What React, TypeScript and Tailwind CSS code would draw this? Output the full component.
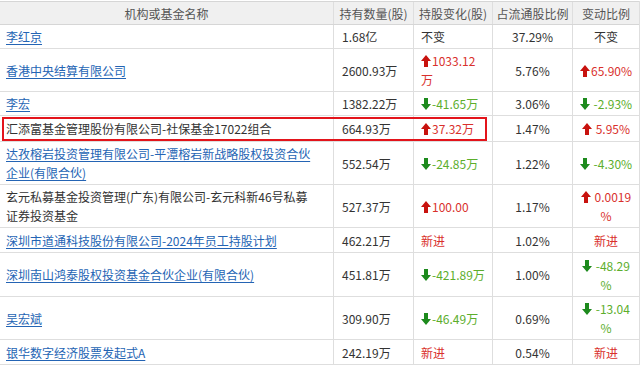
import type { ReactNode } from "react";

const Up = () => (
  <svg width="10" height="12" viewBox="0 0 10 12" className="inline-block align-[-1px] mr-[1px]">
    <path d="M5 0 L10 6 L7 6 L7 12 L3 12 L3 6 L0 6 Z" fill="#c8120e" />
  </svg>
);

const Down = () => (
  <svg width="10" height="12" viewBox="0 0 10 12" className="inline-block align-[-1px] mr-[1px]">
    <path d="M5 12 L10 6 L7 6 L7 0 L3 0 L3 6 L0 6 Z" fill="#1d8a1d" />
  </svg>
);

const Red = ({ children }: { children: ReactNode }) => <span className="text-[#d9302c]">{children}</span>;
const Green = ({ children }: { children: ReactNode }) => <span className="text-[#5cae2c]">{children}</span>;

type Row = {
  name: ReactNode;
  link: boolean;
  h: string;
  qty: string;
  change: ReactNode;
  pct: string;
  ratio: ReactNode;
  boxed?: boolean;
};

const rows: Row[] = [
  { name: "李红京", link: true, h: "h-[24px]", qty: "1.68亿", change: "不变", pct: "37.29%", ratio: "不变" },
  {
    name: "香港中央结算有限公司",
    link: true,
    h: "h-[43px]",
    qty: "2600.93万",
    change: (
      <Red>
        <Up />1033.12
        <br />万
      </Red>
    ),
    pct: "5.76%",
    ratio: (
      <Red>
        <Up />65.90%
      </Red>
    ),
  },
  {
    name: "李宏",
    link: true,
    h: "h-[24px]",
    qty: "1382.22万",
    change: (
      <Green>
        <Down />-41.65万
      </Green>
    ),
    pct: "3.06%",
    ratio: (
      <Green>
        <Down /> -2.93%
      </Green>
    ),
  },
  {
    name: "汇添富基金管理股份有限公司-社保基金17022组合",
    link: false,
    h: "h-[26px]",
    qty: "664.93万",
    change: (
      <Red>
        <Up />37.32万
      </Red>
    ),
    pct: "1.47%",
    ratio: (
      <Red>
        <Up /> 5.95%
      </Red>
    ),
    boxed: true,
  },
  {
    name: (
      <>
        达孜榕岩投资管理有限公司-平潭榕岩新战略股权投资合伙
        <br />
        企业(有限合伙)
      </>
    ),
    link: true,
    h: "h-[43px]",
    qty: "552.54万",
    change: (
      <Green>
        <Down />-24.85万
      </Green>
    ),
    pct: "1.22%",
    ratio: (
      <Green>
        <Down /> -4.30%
      </Green>
    ),
  },
  {
    name: (
      <>
        玄元私募基金投资管理(广东)有限公司-玄元科新46号私募
        <br />
        证券投资基金
      </>
    ),
    link: false,
    h: "h-[43px]",
    qty: "527.37万",
    change: (
      <Red>
        <Up />100.00
      </Red>
    ),
    pct: "1.17%",
    ratio: (
      <Red>
        <Up /> 0.0019
        <br />%
      </Red>
    ),
  },
  {
    name: "深圳市道通科技股份有限公司-2024年员工持股计划",
    link: true,
    h: "h-[25px]",
    qty: "462.21万",
    change: <Red>新进</Red>,
    pct: "1.02%",
    ratio: <Red>新进</Red>,
  },
  {
    name: "深圳南山鸿泰股权投资基金合伙企业(有限合伙)",
    link: true,
    h: "h-[44px]",
    qty: "451.81万",
    change: (
      <Green>
        <Down />-421.89万
      </Green>
    ),
    pct: "1.00%",
    ratio: (
      <Green>
        <Down /> -48.29
        <br />%
      </Green>
    ),
  },
  {
    name: "吴宏斌",
    link: true,
    h: "h-[43px]",
    qty: "309.90万",
    change: (
      <Green>
        <Down />-46.49万
      </Green>
    ),
    pct: "0.69%",
    ratio: (
      <Green>
        <Down /> -13.04
        <br />%
      </Green>
    ),
  },
  {
    name: "银华数字经济股票发起式A",
    link: true,
    h: "h-[25px]",
    qty: "242.19万",
    change: <Red>新进</Red>,
    pct: "0.54%",
    ratio: <Red>新进</Red>,
  },
];

const cols = "grid grid-cols-[333px_80px_79px_80px_67px]";
const cell = "flex items-center border-l border-[#dedede]";

export default function App() {
  return (
    <div className="w-[640px] h-[367px] bg-white pt-[1px] text-[12px] leading-[19px] text-[#333] font-['Noto_Sans_CJK_SC','Microsoft_YaHei',sans-serif]">
      <div className="w-[640px] border-r border-[#dedede]">
        <div className={`${cols} h-[24px] bg-[#f0f0f0] border-t border-b border-[#d6d6d6] text-[#555]`}>
          <div className="flex items-center justify-center">机构或基金名称</div>
          <div className={`${cell} justify-center`}>持有数量(股)</div>
          <div className={`${cell} justify-center`}>持股变化(股)</div>
          <div className={`${cell} justify-center`}>占流通股比例</div>
          <div className={`${cell} justify-center`}>变动比例</div>
        </div>
        {rows.map((r, i) => (
          <div key={i} className={`${cols} ${r.h} relative border-b border-[#dedede]`}>
            {r.boxed && (
              <div className="absolute left-[2px] top-[1px] w-[485px] h-[24px] border-2 border-[#e3141b] pointer-events-none" />
            )}
            <div className="flex items-center pl-[6px]">
              {r.link ? (
                <a href="#" className="text-[#2464b4] underline underline-offset-2 decoration-[#2464b4]">
                  {r.name}
                </a>
              ) : (
                <span>{r.name}</span>
              )}
            </div>
            <div className={`${cell} pl-[8px]`}>{r.qty}</div>
            <div className={`${cell} pl-[7px]`}>
              <div>{r.change}</div>
            </div>
            <div className={`${cell} justify-center`}>{r.pct}</div>
            <div className={`${cell} justify-center text-center`}>
              <div>{r.ratio}</div>
            </div>
          </div>
        ))}
      </div>
    </div>
  );
}
